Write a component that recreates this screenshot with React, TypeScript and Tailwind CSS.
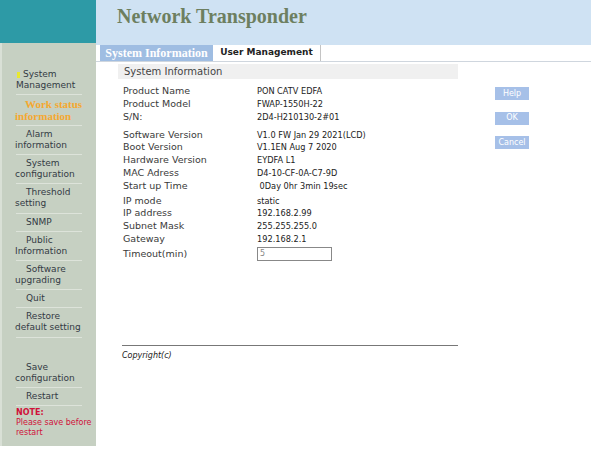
const menu: { first: string; rest?: string }[] = [
  { first: 'Alarm', rest: 'information' },
  { first: 'System', rest: 'configuration' },
  { first: 'Threshold', rest: 'setting' },
  { first: 'SNMP' },
  { first: 'Public', rest: 'Information' },
  { first: 'Software', rest: 'upgrading' },
  { first: 'Quit' },
  { first: 'Restore', rest: 'default setting' },
];

const rowsA = [
  ['Product Name', 'PON CATV EDFA'],
  ['Product Model', 'FWAP-1550H-22'],
  ['S/N:', '2D4-H210130-2#01'],
];

const rowsB = [
  ['Software Version', 'V1.0 FW Jan 29 2021(LCD)'],
  ['Boot Version', 'V1.1EN Aug 7 2020'],
  ['Hardware Version', 'EYDFA L1'],
  ['MAC Adress', 'D4-10-CF-0A-C7-9D'],
  ['Start up Time', ' 0Day 0hr 3min 19sec'],
];

const rowsC = [
  ['IP mode', 'static'],
  ['IP address', '192.168.2.99'],
  ['Subnet Mask', '255.255.255.0'],
  ['Gateway', '192.168.2.1'],
];

function MenuItem({ first, rest }: { first: string; rest?: string }) {
  return (
    <div className="mx-[14px] border-b border-[#dde3da] py-[3.1px] text-[9px] leading-[11px] text-[#333a44]">
      <div className="pl-[10px]">{first}</div>
      {rest && <div className="-ml-[1px] whitespace-nowrap">{rest}</div>}
    </div>
  );
}

function Row({ k, v }: { k: string; v: string }) {
  return (
    <div className="flex h-[12.7px] items-center">
      <div className="w-[134px] text-[9.5px] text-[#3a3a3a]">{k}</div>
      <div className="whitespace-pre text-[8.2px] text-[#222]">{v}</div>
    </div>
  );
}

export default function App() {
  return (
    <div className="w-[591px] h-[460px] bg-white overflow-hidden" style={{ fontFamily: '"DejaVu Sans", Verdana, sans-serif' }}>
      {/* Header */}
      <div className="flex h-[43px]">
        <div className="w-[96px] bg-[#2d9aa6]" />
        <div className="flex-1 bg-[#cfe2f3] pl-[21px] pt-[3px]">
          <h1 className="text-[20px] font-bold leading-[26px] text-[#6d7f60]" style={{ fontFamily: '"Liberation Serif", "Times New Roman", serif' }}>
            Network Transponder
          </h1>
        </div>
      </div>

      <div className="flex">
        {/* Sidebar */}
        <div className="w-[96px] h-[403px] bg-[#c6d0c2] border-l-2 border-[#d9e0d6] pt-[26px]">
          <div className="mx-[14px] border-b border-[#dde3da] pb-[3px] text-[9px] leading-[11px] text-[#333a44]">
            <div className="flex items-center gap-[3px] -ml-[2px] pl-[3px]">
              <span className="inline-block w-[3px] h-[6px] bg-[#e8e830]" />
              <span>System</span>
            </div>
            <div>Management</div>
          </div>
          <div
            className="mx-[14px] whitespace-nowrap border-b border-[#dde3da] py-[3px] text-[11px] font-bold leading-[12px] text-[#f5a830]"
            style={{ fontFamily: '"Liberation Serif", "Times New Roman", serif' }}
          >
            <div className="pl-[9px]">Work status</div>
            <div className="-ml-[1px]">information</div>
          </div>
          {menu.map((m) => (
            <MenuItem key={m.first} {...m} />
          ))}
          <div className="h-[21px]" />
          <MenuItem first="Save" rest="configuration" />
          <MenuItem first="Restart" />
          <div className="ml-[14px] mt-[2px] whitespace-nowrap text-[8px] leading-[10px] text-[#d0103a]">
            <div className="font-bold">NOTE:</div>
            <div>Please save before</div>
            <div>restart</div>
          </div>
        </div>

        {/* Main */}
        <div className="flex-1">
          <div className="flex h-[19px] items-end border-b border-[#cfd6de] bg-[#cfe2f3]">
            <div className="flex h-[16px] w-full bg-white">
              <div
                className="ml-[4px] flex w-[113px] items-center justify-center bg-[#9fbde2] text-[12px] font-bold text-white"
                style={{ fontFamily: '"Liberation Serif", "Times New Roman", serif' }}
              >
                System Information
              </div>
              <div className="flex w-[108px] items-center justify-center border-r border-[#c4c4c4] text-[9px] font-bold text-[#222]">
                User Management
              </div>
            </div>
          </div>

          <div className="flex">
            <div className="ml-[22px] w-[340px]">
              <div className="mt-[2px] h-[15px] bg-[#f0f0f0] pl-[6px] text-[10px] leading-[15px] text-[#444]">
                System Information
              </div>
              <div className="mt-[6px] pl-[5px]">
                {rowsA.map(([k, v]) => (
                  <Row key={k} k={k} v={v} />
                ))}
                <div className="h-[5.5px]" />
                {rowsB.map(([k, v]) => (
                  <Row key={k} k={k} v={v} />
                ))}
                <div className="h-[2.5px]" />
                {rowsC.map(([k, v]) => (
                  <Row key={k} k={k} v={v} />
                ))}
                <div className="mt-[2px] flex items-center">
                  <div className="w-[134px] text-[9.5px] text-[#3a3a3a]">Timeout(min)</div>
                  <div className="flex h-[14px] w-[75px] items-center border border-[#888] pl-[2px] text-[8px] text-[#888]">5</div>
                </div>
              </div>
              <div className="mt-[83px] ml-[4px] border-t border-[#777]" />
              <div className="ml-[4px] mt-[4px] text-[8px] italic text-[#222]">Copyright(c)</div>
            </div>
            <div className="ml-[37px] mt-[25px] flex flex-col gap-[11.5px]">
              {['Help', 'OK', 'Cancel'].map((b) => (
                <div key={b} className="flex h-[13px] w-[34px] items-center justify-center bg-[#a6c0e8] text-[8px] text-white">
                  {b}
                </div>
              ))}
            </div>
          </div>
        </div>
      </div>
    </div>
  );
}
